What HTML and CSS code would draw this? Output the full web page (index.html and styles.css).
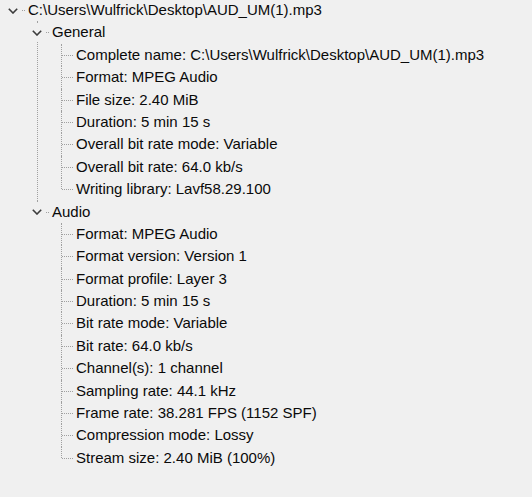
FILE: index.html
```html
<!DOCTYPE html>
<html>
<head>
<meta charset="utf-8">
<link rel="stylesheet" href="styles.css">
</head>
<body>
<ul class="tree">
  <li class="node root">
    <div class="row"><span class="toggle"><svg width="10" height="6" viewBox="0 0 10 6"><polyline points="0.8,0.8 5,5 9.2,0.8"/></svg></span><span class="label">C:\Users\Wulfrick\Desktop\AUD_UM(1).mp3</span></div>
    <ul>
      <li class="node">
        <div class="row"><span class="toggle"><svg width="10" height="6" viewBox="0 0 10 6"><polyline points="0.8,0.8 5,5 9.2,0.8"/></svg></span><span class="label">General</span></div>
        <ul>
          <li class="leaf"><div class="row"><span class="label">Complete name: C:\Users\Wulfrick\Desktop\AUD_UM(1).mp3</span></div></li>
          <li class="leaf"><div class="row"><span class="label">Format: MPEG Audio</span></div></li>
          <li class="leaf"><div class="row"><span class="label">File size: 2.40 MiB</span></div></li>
          <li class="leaf"><div class="row"><span class="label">Duration: 5 min 15 s</span></div></li>
          <li class="leaf"><div class="row"><span class="label">Overall bit rate mode: Variable</span></div></li>
          <li class="leaf"><div class="row"><span class="label">Overall bit rate: 64.0 kb/s</span></div></li>
          <li class="leaf"><div class="row"><span class="label">Writing library: Lavf58.29.100</span></div></li>
        </ul>
      </li>
      <li class="node">
        <div class="row"><span class="toggle"><svg width="10" height="6" viewBox="0 0 10 6"><polyline points="0.8,0.8 5,5 9.2,0.8"/></svg></span><span class="label">Audio</span></div>
        <ul>
          <li class="leaf"><div class="row"><span class="label">Format: MPEG Audio</span></div></li>
          <li class="leaf"><div class="row"><span class="label">Format version: Version 1</span></div></li>
          <li class="leaf"><div class="row"><span class="label">Format profile: Layer 3</span></div></li>
          <li class="leaf"><div class="row"><span class="label">Duration: 5 min 15 s</span></div></li>
          <li class="leaf"><div class="row"><span class="label">Bit rate mode: Variable</span></div></li>
          <li class="leaf"><div class="row"><span class="label">Bit rate: 64.0 kb/s</span></div></li>
          <li class="leaf"><div class="row"><span class="label">Channel(s): 1 channel</span></div></li>
          <li class="leaf"><div class="row"><span class="label">Sampling rate: 44.1 kHz</span></div></li>
          <li class="leaf"><div class="row"><span class="label">Frame rate: 38.281 FPS (1152 SPF)</span></div></li>
          <li class="leaf"><div class="row"><span class="label">Compression mode: Lossy</span></div></li>
          <li class="leaf"><div class="row"><span class="label">Stream size: 2.40 MiB (100%)</span></div></li>
        </ul>
      </li>
    </ul>
  </li>
</ul>
</body>
</html>
```
FILE: styles.css
```css
html, body {
  margin: 0;
  padding: 0;
  background: #f0f0f0;
  height: 100%;
}
body {
  font-family: "Liberation Sans", Arial, sans-serif;
  font-size: 15px;
  color: #0a0a0a;
  overflow: hidden;
}
.tree, .tree ul {
  list-style: none;
  margin: 0;
  padding: 0;
}
.tree {
  margin-top: -1px;
}
.tree ul {
  padding-left: 24px;
}
.tree li {
  position: relative;
}
/* vertical connector for the sibling line */
.tree li::before {
  content: "";
  position: absolute;
  left: 13px;
  top: 0;
  bottom: 0;
  border-left: 1px dotted #a0a0a0;
}
.tree li:last-child::before {
  bottom: auto;
  height: 11px;
}
.tree li.root::before {
  display: none;
}
/* horizontal stub */
.tree li::after {
  content: "";
  position: absolute;
  left: 14px;
  top: 11px;
  width: 11px;
  border-top: 1px dotted #a0a0a0;
}
.row {
  height: 22.4px;
  display: flex;
  align-items: center;
  padding-left: 28px;
  white-space: nowrap;
}
.node > .row {
  padding-left: 5px;
}
.toggle {
  position: relative;
  z-index: 1;
  width: 16px;
  height: 18px;
  margin-right: 7px;
  background: #f0f0f0;
  display: flex;
  align-items: center;
  justify-content: center;
}
.toggle svg {
  display: block;
  margin-top: 1px;
}
.toggle polyline {
  fill: none;
  stroke: #3c3c3c;
  stroke-width: 1.6;
}
.label {
  position: relative;
  z-index: 1;
  line-height: 22.4px;
}
```
